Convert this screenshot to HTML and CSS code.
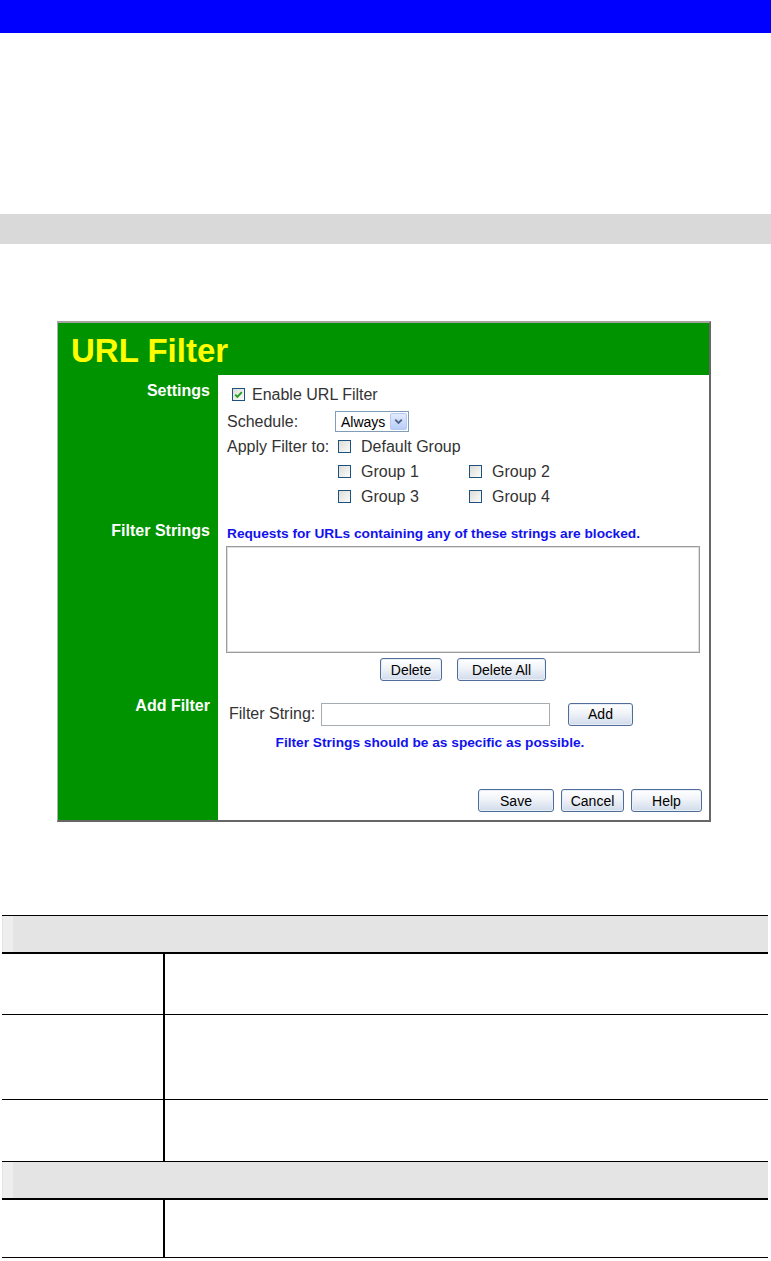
FILE: index.html
```html
<!DOCTYPE html>
<html lang="en">
<head>
  <meta charset="UTF-8">
  <meta name="viewport" content="width=device-width, initial-scale=1.0">
  <title>URL Filter</title>
  <link rel="stylesheet" href="styles.css">
</head>
<body>
  <div class="topbar"></div>
  <div class="band"></div>

  <div class="shot">
    <div class="shot-title">URL Filter</div>

    <div class="label label-first">Settings</div>
    <div class="pane settings">
      <div class="row">
        <span class="check on"><svg viewBox="0 0 11 11" width="11" height="11"><polyline points="2.2,5.6 4.4,7.8 8.8,3.2" fill="none" stroke="#21a121" stroke-width="1.9"/></svg></span>
        <span>Enable URL Filter</span>
      </div>
      <div class="row row-sched">
        <span class="key key-sched">Schedule:</span>
        <span class="select">
          <span class="select-text">Always</span>
          <span class="select-arrow"><svg viewBox="0 0 16 16" width="15" height="15"><polyline points="4.5,6 8,9.5 11.5,6" fill="none" stroke="#4d6185" stroke-width="2"/></svg></span>
        </span>
      </div>
      <div class="row">
        <span class="key">Apply Filter to:</span>
        <span class="check"></span>
        <span>Default Group</span>
      </div>
      <div class="row groups">
        <span class="grp"><span class="check"></span>Group 1</span>
        <span class="grp"><span class="check"></span>Group 2</span>
      </div>
      <div class="row groups">
        <span class="grp"><span class="check"></span>Group 3</span>
        <span class="grp"><span class="check"></span>Group 4</span>
      </div>
    </div>

    <div class="label">Filter Strings</div>
    <div class="pane strings">
      <p class="note note-top">Requests for URLs containing any of these strings are blocked.</p>
      <textarea class="list"></textarea>
      <div class="list-btns">
        <button class="btn btn-delete" type="button">Delete</button>
        <button class="btn btn-delete-all" type="button">Delete All</button>
      </div>
    </div>

    <div class="label">Add Filter</div>
    <div class="pane add">
      <div class="add-box">
        <div class="add-row">
          <span class="key key-fs">Filter String:</span>
          <input class="field" type="text">
          <button class="btn btn-add" type="button">Add</button>
        </div>
        <p class="note note-hint">Filter Strings should be as specific as possible.</p>
      </div>
    </div>

    <div class="label"></div>
    <div class="pane actions">
      <button class="btn btn-save" type="button">Save</button>
      <button class="btn btn-cancel" type="button">Cancel</button>
      <button class="btn btn-help" type="button">Help</button>
    </div>
  </div>

  <div class="spec">
    <div class="spec-head"></div>
    <div class="spec-row row-a"><div></div><div></div></div>
    <div class="spec-row row-b"><div></div><div></div></div>
    <div class="spec-row row-c"><div></div><div></div></div>
    <div class="spec-head spec-head-next"></div>
    <div class="spec-row row-d"><div></div><div></div></div>
  </div>
</body>
</html>
```

FILE: styles.css
```css
* {
  box-sizing: border-box;
}

body {
  margin: 0;
  background: #fff;
  font-family: "Liberation Sans", Arial, sans-serif;
}

.topbar {
  height: 33px;
  background: #0000ff;
}

.band {
  height: 30px;
  margin-top: 181px;
  background: #d9d9d9;
}

/* router screenshot */
.shot {
  display: grid;
  grid-template-columns: 160px 1fr;
  width: 654px;
  margin: 77px 0 0 57px;
  background: #009300;
  border-top: 2px solid #a3a3a3;
  border-left: 1px solid #b0b0b0;
  border-right: 2px solid #666;
  border-bottom: 2px solid #666;
}

.shot-title {
  grid-column: 1 / -1;
  height: 52px;
  padding: 8px 0 0 13px;
  line-height: 40px;
  font-size: 33px;
  font-weight: bold;
  color: #ffff00;
}

.label {
  padding-right: 8px;
  text-align: right;
  font-size: 16px;
  font-weight: bold;
  line-height: 18px;
  color: #fff;
}

.label-first {
  padding-top: 7px;
}

.pane {
  background: #fff;
  padding-left: 9px;
  font-size: 16px;
  color: #333;
}

.row {
  display: flex;
  align-items: center;
  height: 25px;
}

.settings {
  padding-top: 7px;
  padding-bottom: 13px;
}

.row-sched {
  margin-top: 2px;
}

.key {
  width: 111px;
  flex: none;
  white-space: nowrap;
}

.key-sched {
  width: 108px;
}

.check {
  display: inline-flex;
  align-items: center;
  justify-content: center;
  flex: none;
  width: 13px;
  height: 13px;
  margin-right: 10px;
  border: 1px solid #1c5180;
  background: linear-gradient(135deg, #dcdcd7, #fbfbf9);
}

.row > .check.on {
  margin-left: 5px;
  margin-right: 7px;
}

.groups {
  padding-left: 111px;
}

.grp {
  display: flex;
  align-items: center;
  width: 131px;
}

.select {
  display: flex;
  align-items: center;
  width: 74px;
  height: 21px;
  padding: 1px;
  border: 1px solid #7f9db9;
  background: #fff;
  font-size: 14px;
  color: #000;
}

.select-text {
  flex: 1;
  padding-left: 4px;
}

.select-arrow {
  display: flex;
  align-items: center;
  justify-content: center;
  width: 17px;
  height: 17px;
  border: 1px solid #b6c9f0;
  border-radius: 2px;
  background: linear-gradient(#e2eafe, #b9cdf7);
}

.note {
  margin: 0;
  font-size: 13.7px;
  font-weight: bold;
  color: #1212ee;
}

.note-top {
  margin-top: 2px;
  line-height: 19px;
}

.list {
  display: block;
  width: 474px;
  height: 107px;
  margin: 3px 0 0 -1px;
  resize: none;
  border: 1px solid #9c9c9c;
  box-shadow: inset 0 0 0 1px #dedede;
  background: #fff;
}

.list-btns {
  display: flex;
  justify-content: center;
  gap: 15px;
  width: 474px;
  margin: 5px 0 0 -1px;
}

.strings {
  padding-bottom: 16px;
}

.btn {
  height: 23px;
  padding: 0;
  font-family: "Liberation Sans", Arial, sans-serif;
  font-size: 14px;
  color: #000;
  border: 1px solid #4f6d98;
  border-radius: 3px;
  background: linear-gradient(#ffffff, #f0f3f8 45%, #d0dbeb);
  box-shadow: inset 0 0 0 1px #e8eef8;
}

.btn-delete { width: 62px; }
.btn-delete-all { width: 89px; }
.btn-add { width: 65px; margin-left: 18px; }
.btn-save { width: 76px; }
.btn-cancel { width: 63px; }
.btn-help { width: 71px; }

.add {
  padding-top: 5px;
}

.add-box {
  width: 406px;
}

.add-row {
  display: flex;
  align-items: center;
  height: 24px;
}

.key-fs {
  width: 92px;
  margin-left: 2px;
}

.field {
  width: 229px;
  height: 23px;
  border: 1px solid #a5acb2;
  background: #fff;
}

.note-hint {
  margin-top: 9px;
  line-height: 16px;
  text-align: center;
}

.actions {
  display: flex;
  justify-content: flex-end;
  gap: 7px;
  padding: 38px 7px 8px 0;
}

/* description table */
.spec {
  margin: 93px 3px 0 2px;
}

.spec-head {
  height: 39px;
  border-top: 1px solid #000;
  border-bottom: 2px solid #000;
  background: linear-gradient(to right, #e4e4e4 1px, #eeeeee 1px, #eeeeee 11px, #e4e4e4 11px);
}

.spec-head-next {
  height: 38px;
  border-top: 0;
}

.spec-row {
  display: grid;
  grid-template-columns: 163px 1fr;
  border-bottom: 1px solid #000;

  > div:first-child {
    border-right: 2px solid #000;
  }
}

.row-a { height: 61px; }
.row-b { height: 85px; }
.row-c { height: 62px; }
.row-d { height: 58px; }
```
